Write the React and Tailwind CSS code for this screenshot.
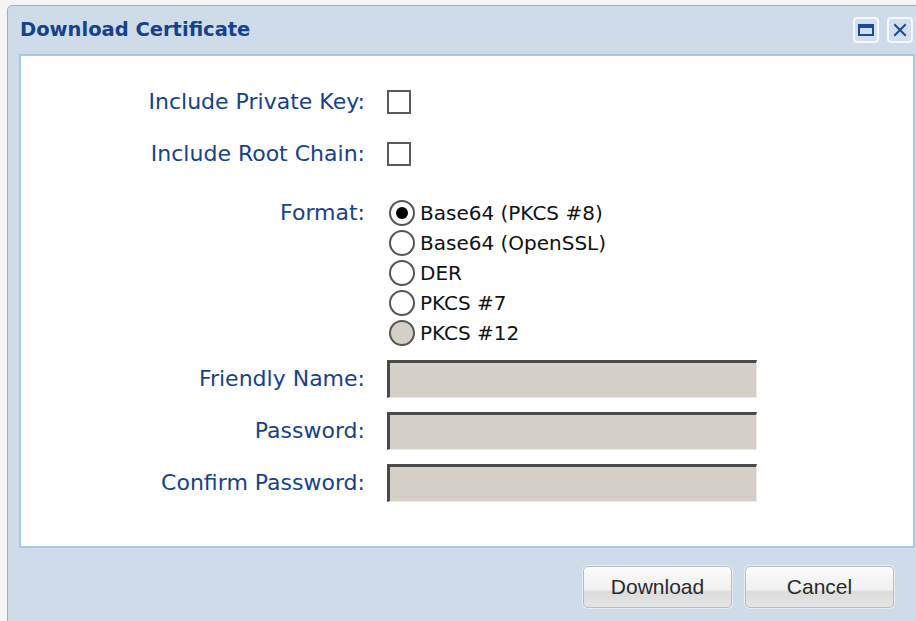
import React from "react";

const labelCls =
  "text-right text-[#15428b] text-[22px] leading-none font-['DejaVu_Sans',sans-serif]";

function Checkbox() {
  return <div className="w-[24px] h-[24px] border-2 border-[#5a5a5a] bg-white" />;
}

function Radio({ checked, disabled, label }) {
  return (
    <div className="h-[30px] flex items-center">
      <div
        className={
          "ml-[2px] w-[26px] h-[26px] rounded-full border-2 border-[#555] flex items-center justify-center " +
          (disabled ? "bg-[#d4d0c8]" : "bg-white")
        }
      >
        {checked && <div className="w-[12px] h-[12px] rounded-full bg-black" />}
      </div>
      <span className="ml-[5px] text-[20px] leading-none text-[#111] font-['DejaVu_Sans',sans-serif]">
        {label}
      </span>
    </div>
  );
}

function TextField() {
  return (
    <div className="w-[370px] h-[38px] bg-[#d4d0c8] border-t-[3px] border-l-[3px] border-t-[#4a4a4a] border-l-[#4a4a4a] border-b border-r border-b-[#ebe9e4] border-r-[#ebe9e4]" />
  );
}

function Row({ label, children, h = "h-[52px]" }) {
  return (
    <div className={"grid grid-cols-[344px_1fr] gap-x-[22px] items-center " + h}>
      <div className={labelCls}>{label}</div>
      <div className="flex items-center">{children}</div>
    </div>
  );
}

function WinButton({ children }) {
  return (
    <div className="w-[26px] h-[26px] rounded-[4px] border-2 border-[#f4f7fb] bg-[#d3dfee] flex items-center justify-center">
      {children}
    </div>
  );
}

function ActionButton({ children }) {
  return (
    <button className="w-[149px] h-[42px] rounded-[5px] border border-[#b9bcc1] bg-[linear-gradient(to_bottom,#fbfbfb_0%,#f0f0f0_58%,#dcdcdc_60%,#e4e4e4_100%)] shadow-[0_0_0_1px_#e9edf3] text-[21px] text-[#2a2a2a] font-['Liberation_Sans',Arial,sans-serif] flex items-center justify-center">
      {children}
    </button>
  );
}

export default function App() {
  return (
    <div className="w-[916px] h-[621px] overflow-hidden bg-[#f3f4f6]">
      <div className="ml-[7px] mt-[5px] w-[916px] h-[640px] border border-[#9eadc2] rounded-tl-[5px] bg-[#cedbe9] flex flex-col">
        {/* title bar */}
        <div className="h-[48px] flex items-center justify-between pl-[12px] pr-[9px]">
          <span className="text-[19.5px] font-bold text-[#15428b] font-['DejaVu_Sans',sans-serif] leading-none">
            Download Certificate
          </span>
          <div className="flex gap-[8px]">
            <WinButton>
              <svg width="16" height="12" viewBox="0 0 16 12">
                <rect x="1" y="1" width="14" height="10" fill="none" stroke="#1b4a98" strokeWidth="2" />
                <rect x="1" y="1" width="14" height="3" fill="#1b4a98" />
              </svg>
            </WinButton>
            <WinButton>
              <svg width="14" height="14" viewBox="0 0 14 14">
                <path d="M2 2 L12 12 M12 2 L2 12" stroke="#1b4a98" strokeWidth="2" strokeLinecap="square" />
              </svg>
            </WinButton>
          </div>
        </div>

        {/* form body */}
        <div className="ml-[11px] w-[896px] h-[494px] bg-white border-2 border-[#a9c5eb] flex flex-col pt-[20px]">
          <Row label="Include Private Key:">
            <Checkbox />
          </Row>
          <Row label="Include Root Chain:">
            <Checkbox />
          </Row>
          <div className="grid grid-cols-[344px_1fr] gap-x-[22px] mt-[18px]">
            <div className={labelCls + " h-[30px] flex items-center justify-end"}>Format:</div>
            <div className="flex flex-col">
              <Radio checked label="Base64 (PKCS #8)" />
              <Radio label="Base64 (OpenSSL)" />
              <Radio label="DER" />
              <Radio label="PKCS #7" />
              <Radio disabled label="PKCS #12" />
            </div>
          </div>
          <div className="mt-[5px]">
            <Row label="Friendly Name:">
              <TextField />
            </Row>
            <Row label="Password:">
              <TextField />
            </Row>
            <Row label="Confirm Password:">
              <TextField />
            </Row>
          </div>
        </div>

        {/* footer buttons */}
        <div className="flex gap-[13px] pl-[575px] pt-[18px]">
          <ActionButton>Download</ActionButton>
          <ActionButton>Cancel</ActionButton>
        </div>
      </div>
    </div>
  );
}
